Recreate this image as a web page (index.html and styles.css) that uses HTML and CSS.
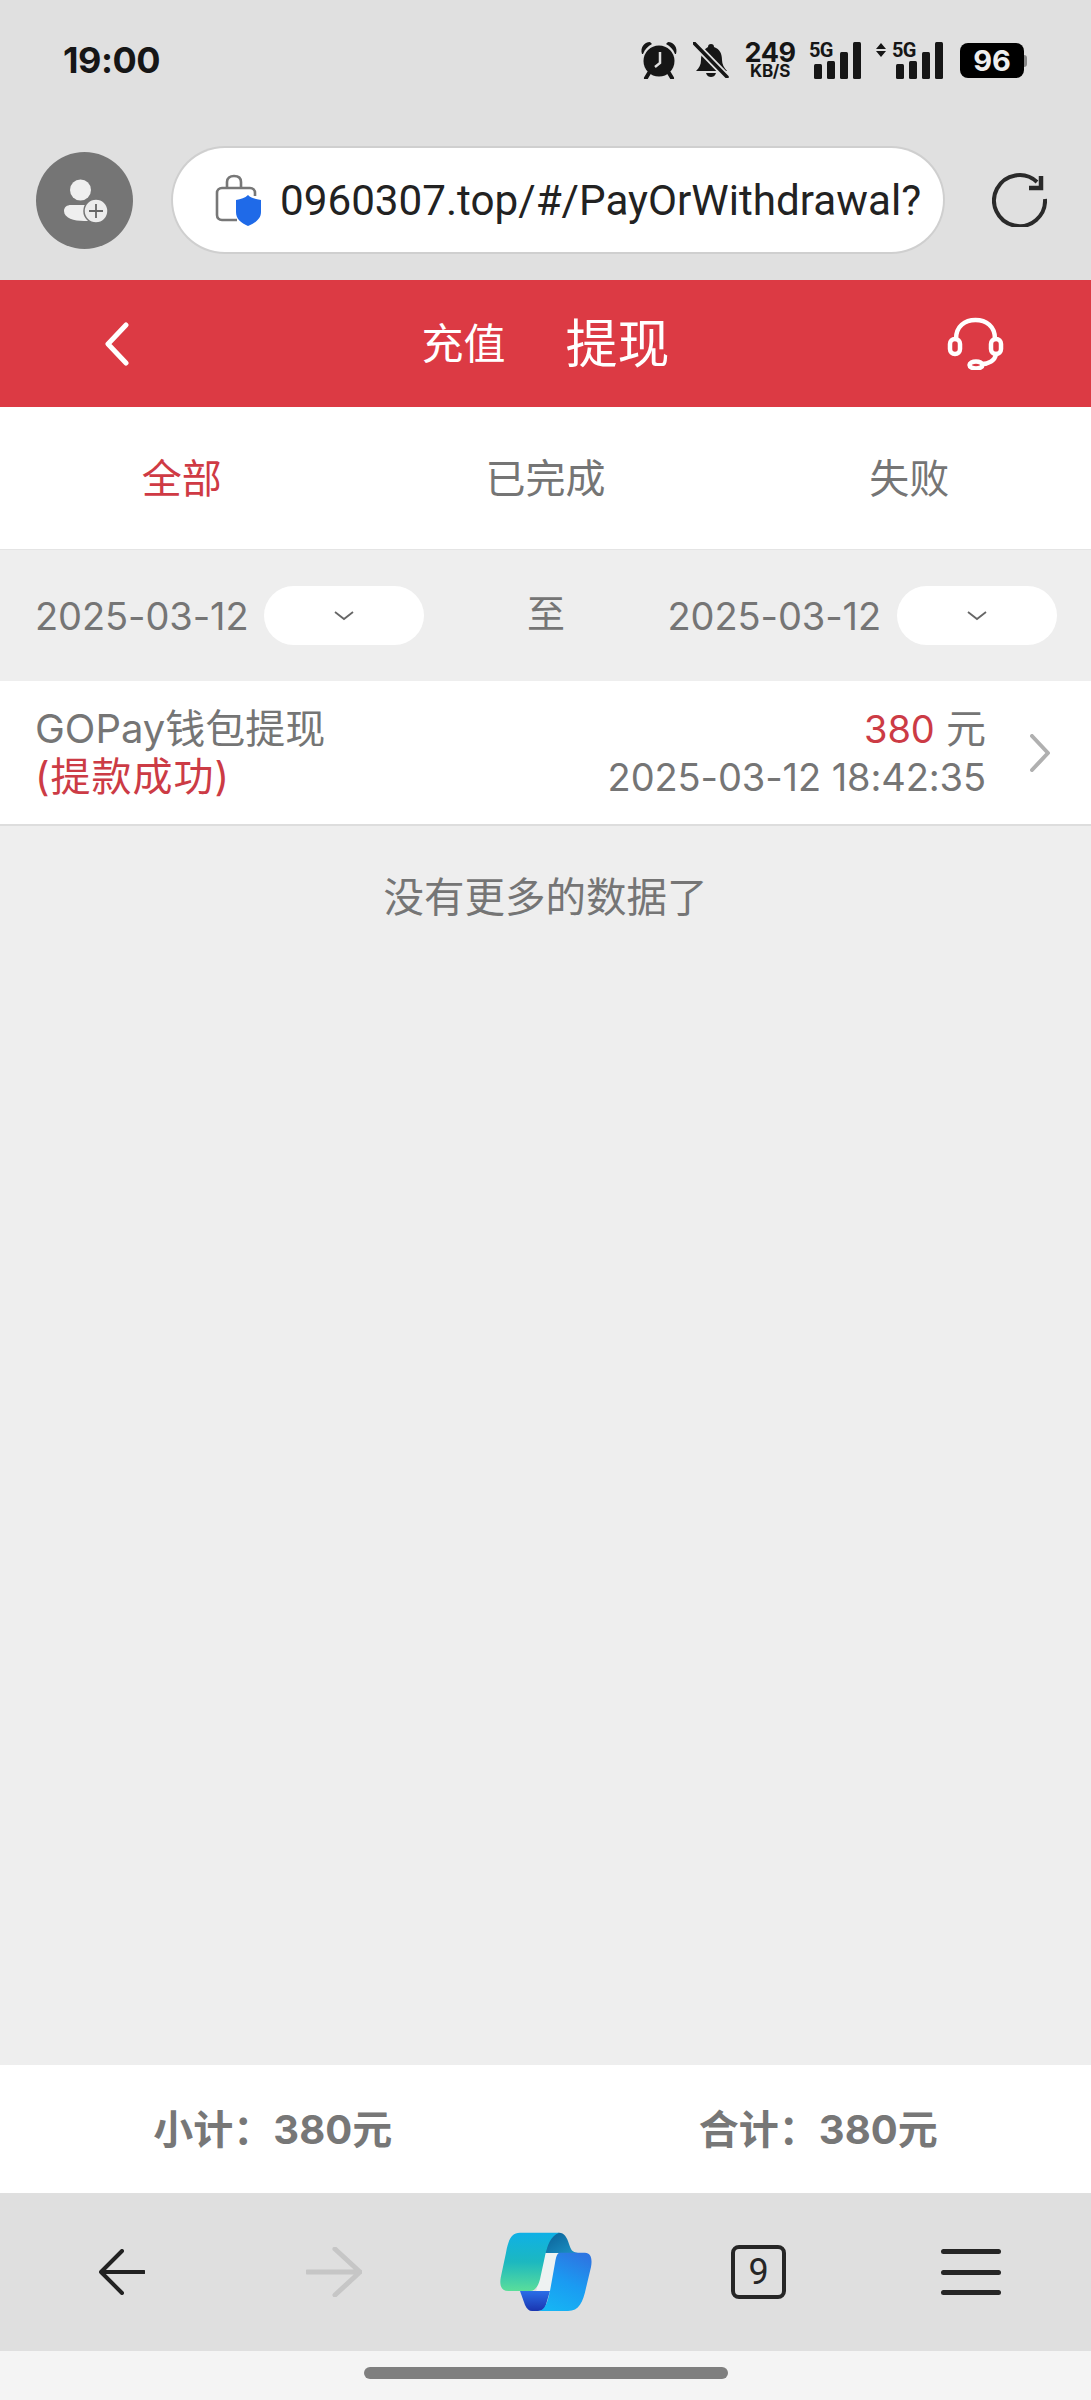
FILE: index.html
```html
<!DOCTYPE html>
<html lang="zh-CN">
<head>
<meta charset="utf-8">
<title>充值提现</title>
<link rel="stylesheet" href="styles.css">
</head>
<body>
<div class="page">
  <header class="chrome">
    <div class="status">
      <span class="time">19:00</span>
      <div class="status-icons">
        <svg class="ic-alarm" viewBox="0 0 38 38"><path class="ink" d="M2 13C0 7 4 1 10 1l2 2C8 5 5 8 3 13zM36 13c2-6-2-12-8-12l-2 2c4 2 7 5 9 10z"/><circle class="ink" cx="19" cy="20" r="15.5"/><path class="ink-s" d="M9 32l-3 5M29 32l3 5"/><path class="hand" d="M20 11v11l-5 4"/></svg>
        <svg class="ic-bell" viewBox="0 0 36 36"><path class="ink" d="M18 2c2 0 3 1 3 3 6 2 8 7 8 13 0 4 2 8 5 11H3c3-3 5-6 5-11 0-6 3-11 7-13 0-2 1-3 3-3z"/><path class="ink" d="M13 31h10c-1 3-3 4-5 4s-4-1-5-4z"/><path class="slash-bg" d="M1 1l33 34"/><path class="slash" d="M1 1l33 34"/></svg>
        <div class="speed"><span class="speed-num">249</span><span class="speed-unit">KB/S</span></div>
        <div class="signal">
          <span class="net">5G</span>
          <span class="sig sig-1"></span><span class="sig sig-2"></span><span class="sig sig-3"></span><span class="sig sig-4"></span>
        </div>
        <div class="signal signal-data">
          <svg class="updown" viewBox="0 0 10 16"><path class="ink" d="M5 1l5 6H0zM5 15l5-6H0z"/></svg>
          <span class="net net-data">5G</span>
          <span class="sig sig-1"></span><span class="sig sig-2"></span><span class="sig sig-3"></span><span class="sig sig-4"></span>
        </div>
        <div class="battery">96</div>
      </div>
    </div>
    <div class="addr-row">
      <svg class="avatar" viewBox="0 0 97 97"><circle class="av-bg" cx="48.500" cy="48.500" r="48.500"/><circle class="av-fg" cx="44.500" cy="38" r="10.500"/><path class="av-fg" d="M35 53h22v16H48C38 69 28 66 28 59c0-4 3-6 7-6z"/><circle class="av-plus" cx="60" cy="59" r="12"/><path class="av-cross" d="M60 52v14M53 59h14"/></svg>
      <div class="addr">
        <svg class="lock" viewBox="0 0 47 52"><path class="lock-line" d="M22 46H7c-3 0-5-2-5-5V19c0-3 2-5 5-5h28c3 0 5 2 5 5v3"/><path class="lock-line" d="M12 14V8c0-4 3-6 7-6s7 2 7 6v6"/><path class="shield" d="M33 21c3 3 7 4 13 5v12c0 7-6 11-13 14-7-3-12-7-12-14V26c5-1 9-2 12-5z"/></svg>
        <span class="url">0960307.top/#/PayOrWithdrawal?</span>
      </div>
      <svg class="reload" viewBox="0 0 55 54"><path class="reload-line" d="M53 26A25.500 25.500 0 1 1 45 9"/><path class="reload-head" d="M49 3v12H37"/></svg>
    </div>
  </header>

  <nav class="appbar">
    <svg class="appbar-back" viewBox="0 0 24 44"><path class="white-line" d="M21 3L3 22l18 19"/></svg>
    <div class="appbar-title"><span class="title-small">充值</span><span class="title-big">提现</span></div>
    <svg class="headset" viewBox="0 0 57 53"><path class="white-thin" d="M9 22C9 9 18 3 28.500 3S48 9 48 22"/><rect class="white-thin" x="3" y="22" width="10" height="15" rx="5"/><rect class="white-thin" x="44" y="22" width="10" height="15" rx="5"/><path class="white-thin" d="M49 37c-1 7-8 10-14 10"/><ellipse class="white-thin" cx="29" cy="48" rx="6.500" ry="3.500"/></svg>
  </nav>

  <div class="tabs">
    <div class="tab tab-active">全部</div>
    <div class="tab">已完成</div>
    <div class="tab">失败</div>
  </div>

  <main class="content">
    <div class="filter">
      <div class="date-group">
        <span class="num">2025-03-12</span>
        <div class="pill"><svg class="pill-arrow" viewBox="0 0 20 10"><path class="pill-line" d="M1 1l9 7 9-7"/></svg></div>
      </div>
      <span class="to">至</span>
      <div class="date-group">
        <span class="num">2025-03-12</span>
        <div class="pill"><svg class="pill-arrow" viewBox="0 0 20 10"><path class="pill-line" d="M1 1l9 7 9-7"/></svg></div>
      </div>
    </div>

    <div class="record">
      <div class="rec-left">
        <div class="rec-line">GOPay钱包提现</div>
        <div class="rec-line rec-red rec-status">(提款成功)</div>
      </div>
      <div class="rec-right">
        <div class="rec-line"><span class="rec-red num">380</span> 元</div>
        <div class="rec-line num">2025-03-12 18:42:35</div>
      </div>
      <svg class="rec-chevron" viewBox="0 0 20 38"><path class="chev-line" d="M2 2l16 17L2 36"/></svg>
    </div>

    <div class="nomore">没有更多的数据了</div>
  </main>

  <div class="summary">
    <div class="sum-cell">小计：380元</div>
    <div class="sum-cell">合计：380元</div>
  </div>

  <footer class="toolbar">
    <svg class="tb-back" viewBox="0 0 46 46"><path class="tb-line" d="M45 23H2M23 2L2 23l21 21"/></svg>
    <svg class="tb-forward" viewBox="0 0 56 50"><path class="tb-line-off" d="M1 25h53M29 2l25 23-25 23"/></svg>
    <svg class="copilot" viewBox="0 0 92 80">
      <defs>
        <linearGradient id="cpA" x1="0" y1="0" x2="0" y2="1"><stop offset="0" stop-color="#0fb0e6"/><stop offset="0.5" stop-color="#1cb8c0"/><stop offset="1" stop-color="#5ade9a"/></linearGradient>
        <linearGradient id="cpB" x1="0.700" y1="0" x2="0.300" y2="1"><stop offset="0" stop-color="#2d76e2"/><stop offset="0.500" stop-color="#1a9bf2"/><stop offset="1" stop-color="#16b4f4"/></linearGradient>
        <linearGradient id="cpC" x1="0" y1="0" x2="1" y2="1"><stop offset="0" stop-color="#0a5f96"/><stop offset="1" stop-color="#1c93c6"/></linearGradient>
        <linearGradient id="cpD" x1="0" y1="0" x2="0" y2="1"><stop offset="0" stop-color="#2a6ee8"/><stop offset="1" stop-color="#1a35b0"/></linearGradient>
      </defs>
      <path class="cp-gap" d="M45 20h14L50 60H36z"/>
      <path fill="url(#cpC)" d="M59.300 .7C54 .7 49 6 47 14l-2 7h33c-6-1-7-3-9-9-2-7-5-11.300-9.700-11.300z"/>
      <path fill="url(#cpD)" d="M20 59h30l-5 17c-2 2-4 3-7 3h-6c-3 0-5-2-7-6z"/>
      <path fill="url(#cpA)" d="M20 .7C11.700 .7 8.300 7.300 6 20.700L.7 45.700C-.7 54 1.700 59 8.300 59H30c5 0 8.300-5 10-11.700L45 24c2.300-10 5-20 14.300-23.300z"/>
      <path fill="url(#cpB)" d="M60 20.700h25c6 0 7.500 6.300 6 14.300l-5 21c-3 14-7 23-18 23H38c7 0 9.500-9 12-20l5-28c1-6 2-10.300 5-10.300z"/>
    </svg>
    <div class="tb-tabs">9</div>
    <div class="tb-menu"><span class="bar"></span><span class="bar"></span><span class="bar"></span></div>
  </footer>

  <div class="gesture"><span class="gesture-bar"></span></div>
</div>
</body>
</html>
```

FILE: styles.css
```css
* { box-sizing: border-box; }
html, body { margin: 0; padding: 0; }
body { font-family: Inter, "Noto Sans CJK SC", sans-serif; color: #757575; background: #eee; }
.page { width: 1091px; height: 2400px; display: flex; flex-direction: column; overflow: hidden; font-size: 40px; }

/* browser chrome */
.chrome { height: 280px; background: #e0e0e0; flex: none; }
.status { height: 120px; padding: 0 64px 0 63px; display: flex; align-items: center; justify-content: space-between; }
.time { font-size: 36px; font-weight: 700; color: #161616; letter-spacing: -0.5px; }
.status-icons { display: flex; align-items: center; }
.ink { fill: #161616; }
.ink-s { stroke: #161616; stroke-width: 4; fill: none; stroke-linecap: round; }
.hand { stroke: #e0e0e0; stroke-width: 2.5; fill: none; }
.ic-alarm { width: 38px; height: 38px; margin-right: 15px; }
.ic-bell { width: 36px; height: 36px; margin-right: 16px; }
.slash-bg { stroke: #e0e0e0; stroke-width: 7; fill: none; }
.slash { stroke: #161616; stroke-width: 3.5; fill: none; stroke-linecap: round; }
.speed { width: 50px; margin-right: 14px; display: flex; flex-direction: column; align-items: center; color: #161616; font-weight: 700; }
.speed-num { display: block; font-size: 27px; line-height: 23px; letter-spacing: -0.5px; }
.speed-unit { display: block; font-size: 17px; line-height: 15px; letter-spacing: -0.3px; }

.signal { position: relative; width: 52px; height: 37px; margin-right: 15px; display: flex; align-items: flex-end; justify-content: flex-end; gap: 5px; }
.signal-data { width: 67px; margin-right: 17px; }
.sig { display: block; width: 8px; background: #161616; border-radius: 1.5px; }
.sig-1 { height: 15px; }
.sig-2 { height: 18px; }
.sig-3 { height: 27px; }
.sig-4 { height: 37px; }
.net { position: absolute; left: 0; top: 0; font-family: Roboto, sans-serif; font-size: 20px; line-height: 17px; font-weight: 700; color: #161616; letter-spacing: -0.8px; }
.net-data { left: 16px; }
.updown { position: absolute; left: 0; top: 0; width: 10px; height: 16px; }

.battery { position: relative; width: 64px; height: 35px; margin-right: 3px; background: #000; border-radius: 8px; color: #eee; font-size: 29px; font-weight: 700; line-height: 35px; text-align: center; }
.battery::after { content: ""; position: absolute; left: 64px; top: 12px; width: 3px; height: 12px; background: #888; border-radius: 0 3px 3px 0; }

.addr-row { height: 104px; margin-top: 28px; padding-left: 36px; display: flex; align-items: center; }
.avatar { width: 97px; height: 97px; flex: none; margin-right: 40px; }
.av-bg { fill: #757575; }
.av-fg { fill: #efefef; }
.av-plus { fill: #ececec; stroke: #757575; stroke-width: 1.5; }
.av-cross { stroke: #666; stroke-width: 1.8; fill: none; }
.addr { width: 770px; height: 104px; flex: none; margin-right: 49px; padding-left: 42px; background: #fff; border-radius: 52px; box-shadow: 0 0 0 2px #cfcfcf; display: flex; align-items: center; }
.lock { width: 47px; height: 52px; margin-right: 18px; flex: none; }
.lock-line { fill: none; stroke: #777; stroke-width: 2.6; }
.shield { fill: #1f6ae8; }
.url { font-family: Roboto, sans-serif; font-size: 42.2px; color: #222; white-space: nowrap; }
.reload { width: 55px; height: 54px; flex: none; }
.reload-line { fill: none; stroke: #2a2a2a; stroke-width: 4; }
.reload-head { fill: none; stroke: #2a2a2a; stroke-width: 4.5; }

/* app bar */
.appbar { height: 127px; background: #dc3a44; flex: none; display: flex; align-items: center; justify-content: space-between; padding: 0 87px 0 105px; color: #fff; }
.appbar-back { width: 24px; height: 44px; }
.white-line { fill: none; stroke: #fff; stroke-width: 5; stroke-linecap: round; stroke-linejoin: round; }
.appbar-title { display: flex; align-items: center; gap: 60px; margin-left: 15px; margin-bottom: 6px; }
.title-small { font-size: 42px; }
.title-big { font-size: 52px; }
.headset { width: 57px; height: 53px; }
.white-thin { fill: none; stroke: #fff; stroke-width: 4.5; stroke-linecap: round; }

/* tabs */
.tabs { height: 143px; flex: none; background: #fff; display: grid; grid-template-columns: repeat(3, 1fr); border-bottom: 1px solid #e4e4e4; }
.tab { display: flex; align-items: center; justify-content: center; padding-bottom: 5px; }
.tab-active { color: #cf3a44; }

/* content */
.content { flex: 1; background: #eee; }
.filter { height: 131px; padding: 0 34px 0 35px; display: flex; align-items: center; justify-content: space-between; }
.date-group { display: flex; align-items: center; gap: 16px; }
.num { font-size: 38px; letter-spacing: -0.1px; }
.pill { width: 160px; height: 59px; background: #fff; border-radius: 30px; display: flex; align-items: center; justify-content: center; }
.pill-arrow { width: 20px; height: 10px; }
.pill-line { fill: none; stroke: #666; stroke-width: 1.8; }
.to { margin-top: -11px; font-size: 38px; }

.record { height: 145px; padding: 0 41px 0 35px; background: #fff; border-bottom: 2px solid #ddd; display: flex; align-items: center; }
.rec-left { flex: 1; }
.rec-right { text-align: right; margin-right: 44px; }
.rec-line { line-height: 48px; white-space: nowrap; }
.rec-red { color: #cc3b45; }
.rec-status { letter-spacing: 1px; }
.rec-chevron { width: 20px; height: 38px; }
.chev-line { fill: none; stroke: #b0b0b0; stroke-width: 4; stroke-linecap: round; stroke-linejoin: round; }
.nomore { text-align: center; line-height: 48px; margin-top: 48px; font-size: 40.5px; }

/* summary */
.summary { height: 128px; flex: none; background: #fff; display: grid; grid-template-columns: repeat(2, 1fr); }
.sum-cell { display: flex; align-items: center; justify-content: center; padding-bottom: 4px; font-weight: 700; color: #777; }

/* toolbar */
.toolbar { height: 158px; flex: none; background: #dfdfdf; display: flex; align-items: center; padding-left: 99px; }
.tb-back { width: 46px; height: 46px; }
.tb-forward { width: 56px; height: 50px; margin-left: 161px; }
.tb-line { fill: none; stroke: #222; stroke-width: 4; stroke-linecap: round; stroke-linejoin: round; }
.tb-line-off { fill: none; stroke: #c6c6c6; stroke-width: 5; stroke-linecap: round; stroke-linejoin: round; }
.copilot { width: 92px; height: 80px; margin-left: 138px; }
.cp-gap { fill: #eef2f2; }
.tb-tabs { width: 55px; height: 54px; margin-left: 139px; border: 4px solid #262626; border-radius: 8px; color: #262626; font-family: Roboto, sans-serif; font-size: 36px; display: flex; align-items: center; justify-content: center; }
.tb-menu { width: 60px; height: 46px; margin-left: 155px; display: flex; flex-direction: column; justify-content: space-between; }
.bar { height: 5px; background: #262626; border-radius: 3px; }

/* gesture */
.gesture { height: 49px; flex: none; background: #f4f4f4; display: flex; justify-content: center; padding-top: 16px; }
.gesture-bar { width: 364px; height: 12px; background: #7f7f7f; border-radius: 6px; }
```
